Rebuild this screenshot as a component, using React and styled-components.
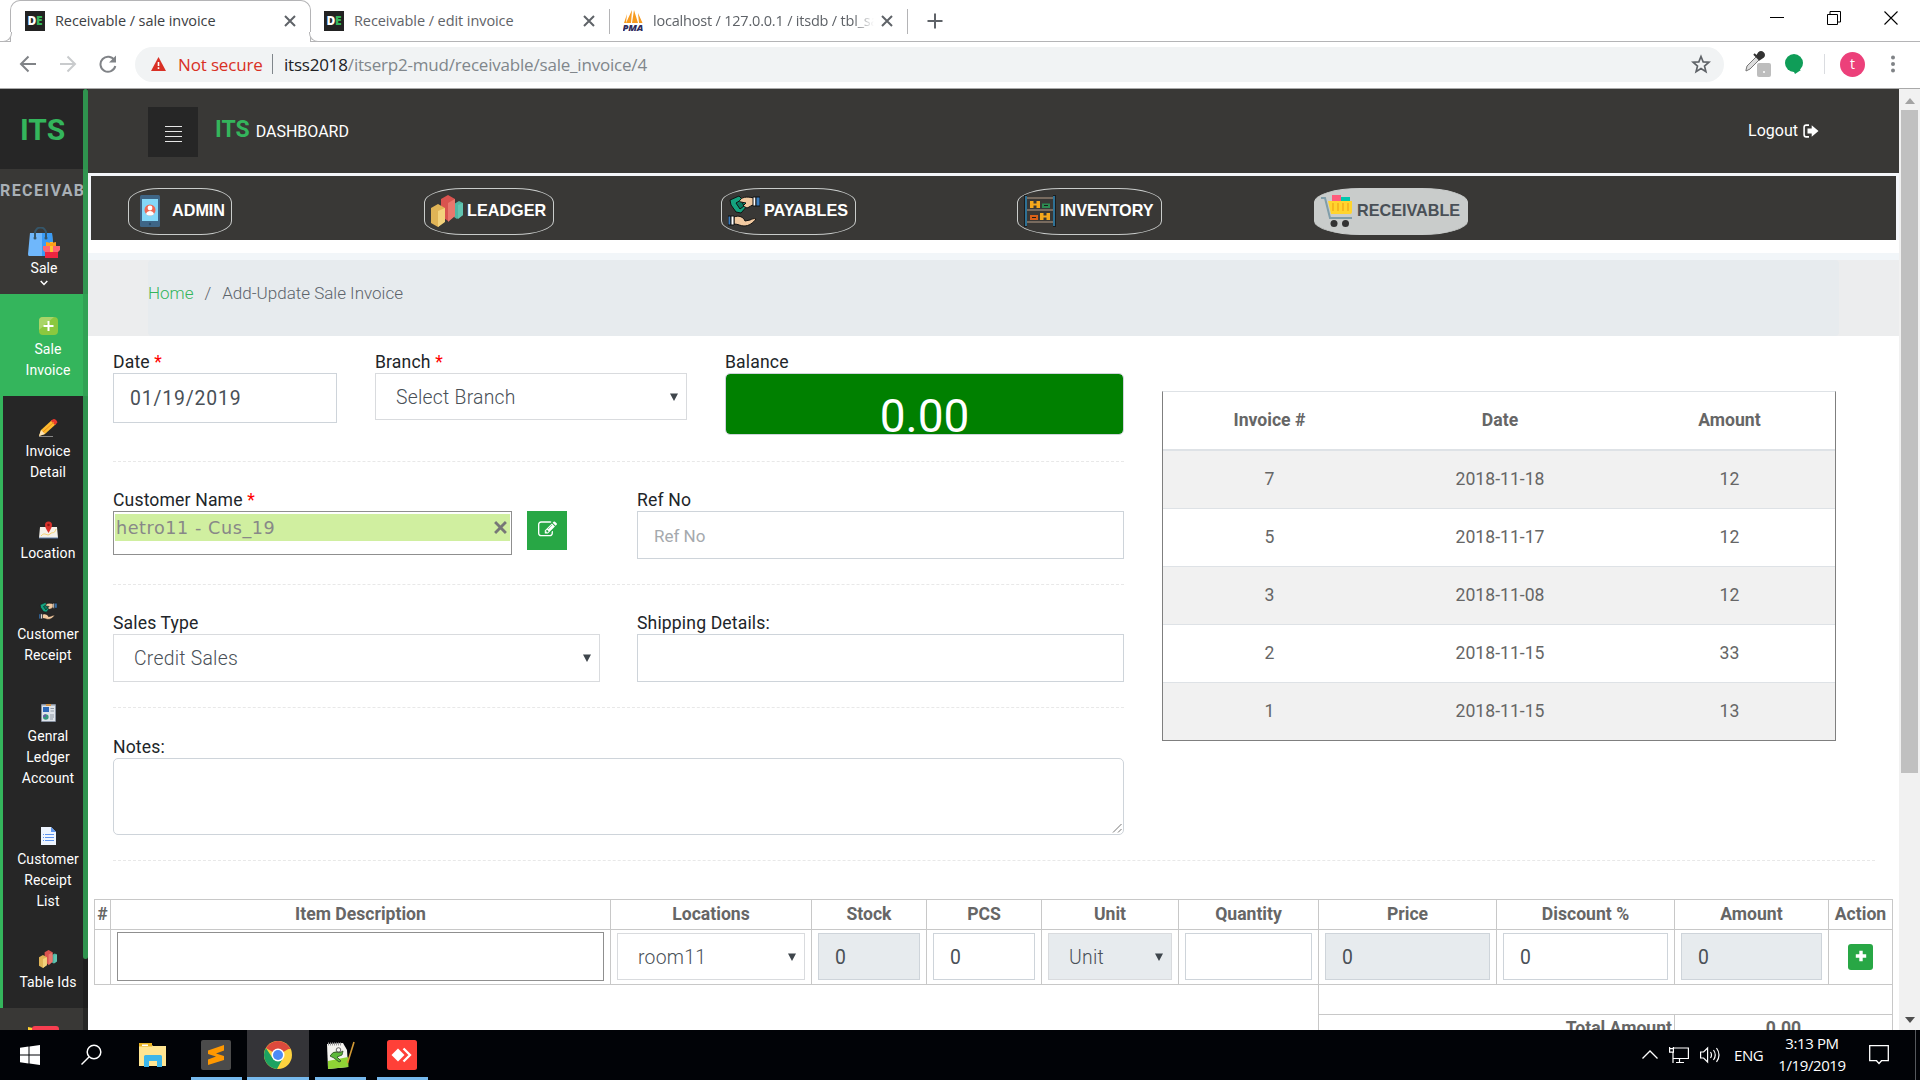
import React from "react";
import styled, { createGlobalStyle, css } from "styled-components";

const Global = createGlobalStyle`
  * { box-sizing: border-box; }
  html, body { margin: 0; padding: 0; overflow: hidden; background: #fff; }
  body { font-family: Roboto, "Liberation Sans", sans-serif; font-size: 17.6px; color: #212529; }
  svg { display: block; flex: none; }
`;

const ui = `"Open Sans", "Noto Sans", sans-serif`;
const dark = "#393836";
const darker = "#262626";
const green = "#34b55c";

const Window = styled.div`
  width: 1920px;
  height: 1080px;
  display: flex;
  flex-direction: column;
  overflow: hidden;
`;

/* ---------- browser chrome ---------- */
const TabStrip = styled.div`
  height: 42px;
  flex: none;
  display: flex;
  border-bottom: 1px solid #b4b4b6;
  padding-left: 10px;
  font-family: ${ui};
`;
const Tab = styled.div`
  position: relative;
  display: flex;
  align-items: center;
  height: 42px;
  width: ${(p) => p.$w}px;
  padding: 0 14px 1px ${(p) => p.$pad}px;
  font-size: 14.5px;
  line-height: 20px;
  letter-spacing: ${(p) => p.$ls || "-0.08px"};
  color: ${(p) => (p.$active ? "#3c4043" : "#5f6368")};
  white-space: nowrap;
  ${(p) =>
    p.$active &&
    css`
      background: #fff;
      border: 1px solid #b4b4b6;
      border-bottom: 0;
      border-radius: 10px 10px 0 0;
      &::before,
      &::after {
        content: "";
        position: absolute;
        bottom: 0;
        width: 9px;
        height: 9px;
        background: #fff;
        border-bottom: 1px solid #b4b4b6;
      }
      &::before {
        left: -9px;
        border-right: 1px solid #b4b4b6;
        border-bottom-right-radius: 9px;
      }
      &::after {
        right: -9px;
        border-left: 1px solid #b4b4b6;
        border-bottom-left-radius: 9px;
      }
    `}
`;
const TabTitle = styled.span`
  flex: 1;
  margin-left: 10px;
  overflow: hidden;
  ${(p) => p.$fade && "mask-image: linear-gradient(90deg, #000 200px, transparent 221px);"}
`;
const TabLine = styled.div`
  width: 1px;
  height: 25px;
  margin-top: 9px;
  background: #b4b4b6;
`;
const Favicon = styled.span`
  width: 20px;
  height: 20px;
  background: #222;
  color: #fff;
  font: 800 12px/20px "Open Sans", sans-serif;
  letter-spacing: -0.3px;
  text-align: center;
  b { color: ${green}; font-weight: 800; }
`;
const NewTab = styled.div`
  margin: 13px 0 0 19px;
`;
const WindowButtons = styled.div`
  margin-left: auto;
  display: flex;
  gap: 43px;
  padding: 11px 22px 0 0;
`;
const Toolbar = styled.div`
  height: 47px;
  flex: none;
  display: flex;
  align-items: center;
  padding: 0 22px 2px 19px;
  border-bottom: 1px solid #a9a9a9;
  font-family: ${ui};
`;
const NavGlyphs = styled.div`
  display: flex;
  gap: 22px;
  width: 116px;
`;
const Omnibox = styled.div`
  width: 1589px;
  height: 35px;
  border-radius: 18px;
  background: #f1f3f4;
  display: flex;
  align-items: center;
  padding: 0 13px 0 16px;
  font-size: 17px;
  color: #80868b;
  white-space: nowrap;
`;
const Danger = styled.span`
  color: #d93025;
  width: 84px;
  margin-left: 12px;
  letter-spacing: -0.15px;
`;
const Bar = styled.i`
  width: 1px;
  height: 20px;
  background: ${(p) => p.$c};
  margin: ${(p) => p.$m};
`;
const Url = styled.span`
  flex: 1;
  letter-spacing: -0.2px;
  b { color: #202124; font-weight: 400; }
`;
const Extensions = styled.div`
  display: flex;
  align-items: center;
  margin-left: 19px;
  flex: 1;
`;
const Hangouts = styled.span`
  margin-left: 13px;
`;
const Avatar = styled.span`
  width: 25px;
  height: 25px;
  border-radius: 50%;
  background: #ec407a;
  color: #fff;
  font: 14px/23px ${ui};
  text-align: center;
  margin-right: auto;
`;
const MenuDots = styled.span`
  margin-right: 3px;
`;

/* ---------- page ---------- */
const Page = styled.div`
  flex: 1;
  min-height: 0;
  display: flex;
  overflow: hidden;
`;
const Sidebar = styled.aside`
  position: relative;
  width: 88px;
  flex: none;
  background: ${dark};
  overflow: hidden;
`;
const SideLogo = styled.div`
  height: 80px;
  background: ${darker};
  color: ${green};
  font-size: 30px;
  font-weight: 700;
  line-height: 82px;
  padding-left: 20px;
`;
const SideTitle = styled.div`
  height: 58px;
  padding-top: 10px;
  line-height: 24px;
  font-size: 16px;
  font-weight: 700;
  letter-spacing: 1.4px;
  color: #a9b0b6;
  width: 86px;
  overflow: hidden;
`;
const SideGroup = styled.div`
  display: flex;
  flex-direction: column;
  align-items: center;
  height: 67px;
  color: #fff;
  font-size: 14px;
  line-height: 21px;
  svg:last-child { margin-top: 1px; }
`;
const SubMenu = styled.div`
  border-left: 3px solid ${green};
  background: ${darker};
`;
const SubItem = styled.div`
  display: flex;
  flex-direction: column;
  align-items: center;
  gap: 4px;
  padding: 23px 4px 15px 9px;
  font-size: 14px;
  letter-spacing: 0.1px;
  line-height: 21px;
  text-align: center;
  color: #fff;
  background: ${(p) => (p.$active ? green : "transparent")};
`;
const SideScroll = styled.div`
  position: absolute;
  right: 0;
  top: 0;
  bottom: 0;
  width: 5px;
  background: rgba(25, 25, 25, 0.55);
  &::after {
    content: "";
    display: block;
    height: 870px;
    border-radius: 3px;
    background: rgba(52, 181, 92, 0.78);
  }
`;
const Main = styled.main`
  flex: 1;
  min-width: 0;
  display: flex;
  flex-direction: column;
  overflow: hidden;
  background: #fff;
`;
const Header = styled.header`
  height: 84px;
  flex: none;
  background: ${dark};
  display: flex;
  align-items: flex-start;
  padding: 18px 80px 0 60px;
  color: #fff;
`;
const Burger = styled.div`
  width: 50px;
  height: 50px;
  background: ${darker};
  display: flex;
  flex-direction: column;
  align-items: center;
  gap: 4px;
  padding-top: 19px;
  i { width: 17px; height: 1px; background: #e6e6e6; flex: none; }
`;
const Brand = styled.div`
  margin-left: 17px;
  font-size: 16px;
  line-height: 30px;
  padding-top: 8px;
  b { font-size: 23px; font-weight: 700; color: ${green}; margin-right: 6px; }
`;
const Logout = styled.div`
  margin-left: auto;
  display: flex;
  align-items: center;
  gap: 5px;
  font-size: 16px;
  line-height: 24px;
  padding-top: 12px;
`;
const ModuleBar = styled.nav`
  height: 67px;
  flex: none;
  border: 3px solid #f4f6fa;
  border-bottom: 0;
  background: ${dark};
  display: grid;
  grid-template-columns: 296px 297px 296px 297px 297px;
  align-items: start;
  justify-items: start;
  padding: 12px 0 0 37px;
`;
const Module = styled.div`
  height: 47px;
  width: ${(p) => p.$w}px;
  border: 1px solid #c9cccb;
  border-radius: 30%;
  display: flex;
  align-items: center;
  padding: 0 0 2px 6px;
  gap: 4px;
  white-space: nowrap;
  font: bold 16.2px "Liberation Sans", Arial, sans-serif;
  color: ${(p) => (p.$on ? "#495057" : "#fff")};
  background: ${(p) => (p.$on ? "#c9cccb" : "transparent")};
`;
const CrumbStrip = styled.div`
  flex: none;
  height: 96px;
  padding: 20px 60px 0;
  background: linear-gradient(#fff 13px, #f2f6f9 13px, #f2f6f9 20px, #ecedee 20px);
`;
const Crumbs = styled.div`
  height: 76px;
  border-radius: 4px;
  background: #e7ebee;
  padding-top: 20px;
  line-height: 26px;
  font-size: 17px;
  font-weight: 300;
  color: #5d646b;
  display: flex;
  gap: 11px;
  a { color: ${green}; }
`;
const FormArea = styled.div`
  display: flex;
  padding: 13px 63px 0 25px;
  flex: none;
`;
const Fields = styled.div`
  width: 1011px;
`;
const FieldRow = styled.div`
  display: flex;
  height: ${(p) => p.$h}px;
  margin-bottom: ${(p) => p.$mb}px;
  border-bottom: 1px dashed #e8e8e8;
`;
const FieldBox = styled.div`
  width: ${(p) => p.$w}px;
  margin-right: ${(p) => p.$mr || 0}px;
`;
const Label = styled.label`
  display: block;
  height: 24px;
  line-height: 26px;
  letter-spacing: 0.14px;
  white-space: nowrap;
  i { color: red; font-style: normal; }
`;
const controlBox = css`
  display: block;
  width: 100%;
  height: ${(p) => p.$h || 48}px;
  border: 1px solid #ced4da;
  background: ${(p) => (p.$off ? "#e7ebee" : "#fff")};
  color: #495057;
  font-family: inherit;
  font-size: 19.36px;
`;
const Input = styled.input`
  ${controlBox}
  border-radius: 0;
  outline: 0;
  padding: ${(p) => (p.$h === 47 ? 2 : 0)}px 16px 0;
  letter-spacing: ${(p) => p.$ls || 0};
  &::placeholder { color: #a5a9ad; font-size: 17px; opacity: 1; }
`;
const SelectBox = styled.div`
  ${controlBox}
  border-color: #d9dbde;
  display: flex;
  align-items: center;
  justify-content: space-between;
  padding: 0 8px 0 20px;
  font-weight: 300;
  letter-spacing: 0.25px;
  span { padding-top: ${(p) => (p.$h === 47 ? 2 : 0)}px; }
`;
const Balance = styled.div`
  height: 62px;
  border: 1px solid #ced4da;
  border-radius: 5px;
  background: green;
  background-clip: padding-box;
  color: #fff;
  font-size: 46px;
  line-height: 54px;
  padding-top: 15px;
  overflow: hidden;
  text-align: center;
`;
const TokenBox = styled.div`
  height: 44px;
  border: 1px solid #8f8f8f;
  padding: 2px 1px;
`;
const Token = styled.div`
  height: 27px;
  background: #d0efa0;
  display: flex;
  align-items: center;
  justify-content: space-between;
  padding: 0 3px 0 1px;
  font: 17.6px "DejaVu Sans", sans-serif;
  letter-spacing: 0.57px;
  color: #888;
`;
const EditButton = styled.div`
  width: 40px;
  height: 39px;
  margin: 24px 70px 0 0;
  background: #28a745;
  color: #fff;
  display: flex;
  align-items: center;
  justify-content: center;
  padding-bottom: 3px;
`;
const Notes = styled.div`
  height: 77px;
  border: 1px solid #ced4da;
  border-radius: 5px;
  display: flex;
  align-items: flex-end;
  justify-content: flex-end;
  padding: 1px;
`;
const InvoiceTable = styled.div`
  margin: 42px 0 0 38px;
  width: 674px;
  height: 350px;
  border: 1px solid #7f7f7f;
  border-top-color: #dee2e6;
`;
const InvoiceRow = styled.div`
  display: grid;
  grid-template-columns: 213px 248px 1fr;
  text-align: center;
  color: #666;
  height: ${(p) => (p.$last ? 57 : 58)}px;
  line-height: 56px;
  border-bottom: ${(p) => (p.$last ? 0 : 1)}px solid #dee2e6;
  background: ${(p) => (p.$odd ? "#f1f1f1" : "#fff")};
  ${(p) => p.$head && "font-weight: 700; height: 59px; line-height: 56px; border-bottom-width: 2px;"}
`;
const LongDash = styled.div`
  width: 1762px;
  flex: none;
  margin: 25px 0 38px 25px;
  border-bottom: 1px dashed #e8e8e8;
`;
const Items = styled.div`
  flex: none;
  margin-left: 6px;
  width: 1799px;
  display: grid;
  grid-template-columns: 16px 500px 201px 115px 115px 137px 140px 178px 178px 154px 64px;
  border-top: 1px solid #c8c8c8;
  border-left: 1px solid #c8c8c8;
`;
const HeadCell = styled.div`
  height: 30px;
  line-height: 29px;
  text-align: center;
  font-weight: 700;
  color: #666;
  white-space: nowrap;
  border-right: 1px solid #c8c8c8;
  border-bottom: 1px solid #c8c8c8;
`;
const Cell = styled.div`
  height: 55px;
  padding: ${(p) => p.$p || "3px 6px"};
  border-right: 1px solid #c8c8c8;
  border-bottom: 1px solid #c8c8c8;
  display: flex;
  justify-content: center;
`;
const ItemPicker = styled.div`
  width: 100%;
  height: 49px;
  border: 1px solid #8f8f8f;
`;
const AddButton = styled.div`
  width: 25px;
  height: 26px;
  margin-top: 11px;
  border-radius: 3px;
  background: #28a745;
  color: #fff;
  display: flex;
  align-items: center;
  justify-content: center;
  padding-bottom: 2px;
`;
const Totals = styled.div`
  margin-left: 1230px;
  width: 575px;
  flex: none;
  border: 1px solid #c8c8c8;
  border-top: 0;
  font-weight: 700;
  color: #666;
`;
const TotalsGap = styled.div`
  height: 30px;
  border-bottom: 1px solid #c8c8c8;
`;
const TotalsRow = styled.div`
  display: grid;
  grid-template-columns: 356px 1fr;
  height: 32px;
  line-height: 27px;
  span:first-child { text-align: right; padding-right: 2px; border-right: 1px solid #c8c8c8; }
  span:last-child { text-align: center; }
`;
const Scrollbar = styled.div`
  width: 21px;
  flex: none;
  background: #f1f1f1;
  padding: 9px 2px 7px;
  display: flex;
  flex-direction: column;
  align-items: center;
  justify-content: space-between;
`;
const Thumb = styled.div`
  width: 17px;
  height: 663px;
  margin: 6px 0 auto;
  background: #c0c0c0;
`;

/* ---------- taskbar ---------- */
const Taskbar = styled.div`
  height: 50px;
  flex: none;
  display: flex;
  background: #010307;
  color: #fff;
  font-family: ${ui};
`;
const Task = styled.div`
  width: ${(p) => p.$w || 62}px;
  display: flex;
  flex-direction: column;
  align-items: center;
  justify-content: center;
  padding-top: ${(p) => (p.$run ? 3 : 0)}px;
  background: ${(p) => (p.$active ? "#343438" : "transparent")};
  &::after {
    content: "";
    display: ${(p) => (p.$run ? "block" : "none")};
    width: ${(p) => (p.$active ? 62 : 51)}px;
    height: 3px;
    background: #76b9ed;
  }
`;
const TaskIcon = styled.div`
  flex: 1;
  display: flex;
  align-items: center;
`;
const Tray = styled.div`
  margin-left: auto;
  display: flex;
  align-items: center;
  width: 278px;
  font-size: 15px;
  letter-spacing: -0.4px;
`;
const TrayIcons = styled.div`
  display: flex;
  align-items: center;
  gap: 11px;
`;
const Lang = styled.span`
  width: 30px;
  margin-left: 14px;
`;
const Clock = styled.div`
  width: 72px;
  margin: 0 21px 0 12px;
  text-align: center;
  line-height: 22px;
  padding-bottom: 2px;
  white-space: nowrap;
`;
const DesktopEdge = styled.i`
  width: 1px;
  height: 50px;
  margin-left: 26px;
  background: #55585c;
`;

/* ---------- drawings ---------- */
const Close = ({ s = 12, c = "#5f6368", w = 2 }) => (
  <svg width={s} height={s} viewBox="0 0 12 12" stroke={c} strokeWidth={w}><path d="M1 1l10 10M11 1L1 11" /></svg>
);
const Caret = () => (
  <svg width="8" height="8" viewBox="0 0 8 8"><path d="M0 .5h8L4 8z" fill="#3f464c" /></svg>
);
const PencilSquare = () => (
  <svg width="19" height="19" viewBox="0 0 1792 1792" fill="#fff"><path d="M888 1184l116-116-152-152-116 116v56h96v96h56zm440-720q-16-16-33 1l-350 350q-17 17-1 33t33-1l350-350q17-17 1-33zm80 594v190q0 119-84.500 203.500t-203.500 84.500h-832q-119 0-203.500-84.500t-84.500-203.500v-832q0-119 84.500-203.500t203.500-84.500h832q63 0 117 25 15 7 18 23 3 17-9 29l-49 49q-14 14-32 8-23-6-45-6h-832q-66 0-113 47t-47 113v832q0 66 47 113t113 47h832q66 0 113-47t47-113v-126q0-13 9-22l64-64q15-15 35-7t20 29zm-96-738l288 288-672 672h-288v-288zm444 132l-92 92-288-288 92-92q28-28 68-28t68 28l152 152q28 28 28 68t-28 68z" /></svg>
);
const SignOut = () => (
  <svg width="16" height="14" viewBox="0 0 16 14"><path d="M6 1.100H3.200Q1.100 1.100 1.100 3.200v7.600q0 2.100 2.100 2.100H6" fill="none" stroke="#fff" strokeWidth="1.600" /><path d="M4.500 4.600h4.200V1.200L15.500 7l-6.800 5.800V9.400H4.500z" fill="#fff" /></svg>
);
const Bars3D = ({ s }) => (
  <svg width={s} height={s} viewBox="0 0 32 32">
    <path d="M23 9l5-3 4 2v12l-6 4-3-2z" fill="#4fb5a3" /><path d="M27 10l5-2v12l-5 4z" fill="#61c5b2" />
    <path d="M10 4l7-4 7 4v17l-7 5-7-5z" fill="#d9534f" /><path d="M17 8l7-4v17l-7 6z" fill="#e8776d" />
    <path d="M0 13l7-4 7 4v13l-7 6-7-4z" fill="#e0b456" /><path d="M7 16l7-3v14l-7 5z" fill="#f3d27c" />
  </svg>
);
const Hands = ({ s }) => (
  <svg width={s} height={s} viewBox="0 0 32 32" stroke="#111" strokeWidth="1" strokeLinejoin="round">
    <path d="M2 5l9-4 9 9-7 8-5-1-5-7z" fill="#14a37f" /><path d="M8 8l5-3 3 6-4 3z" fill="#0a7a61" />
    <path d="M12 5c3-4 9-3 14-2v7c-3 0-4 2-7 3l-4-2 3-3-5-1c-1 0-2-1-1-2z" fill="#f1c9a0" />
    <path d="M25 2h3v9h-3z" fill="#fff" /><path d="M28 2h4v9h-4z" fill="#3d7ec0" />
    <path d="M6 22c5-2 8 0 10 2l1 2 5-1c2-1 4-2 6-1-3 4-7 7-12 7-3 0-6-2-10-2z" fill="#f1c9a0" />
    <path d="M0 21h3v9H0z" fill="#3d7ec0" /><path d="M3 21h3v9H3z" fill="#fff" />
  </svg>
);
const Phone = () => (
  <svg width="33" height="32" viewBox="0 0 33 32">
    <rect x="5" y="0" width="20" height="32" rx="1.500" fill="#3e6586" /><rect x="7" y="4" width="16" height="22" fill="#84d8f8" />
    <circle cx="15" cy="15" r="5.500" fill="#ef6a55" /><circle cx="15" cy="13" r="2.400" fill="#fff" /><path d="M11 19c1-4 7-4 8 0-2 2-6 2-8 0z" fill="#fff" />
    <circle cx="15" cy="29" r="1.200" fill="#2a4b68" />
  </svg>
);
const Shelf = () => (
  <svg width="32" height="32" viewBox="0 0 32 32">
    <path d="M3 3h26M3 15h26M3 27h26" stroke="#8d7c6d" strokeWidth="1.500" />
    <path d="M1.500 0v32M30.500 0v32" stroke="#1c1c1c" strokeWidth="3" /><path d="M2 1v30M30 1v30" stroke="#3aa0d8" strokeWidth="1.300" />
    <path d="M6 6h3.500v2.500h3V6H16v7h-3.500v-2.500h-3V13H6zM16 18h3.500v2.500h3V18H26v7h-3.500v-2.500h-3V25H16z" fill="#f5a81c" />
    <path d="M18 8.500h8V13h-8z" fill="#2c8c52" /><path d="M20 10.500h4" stroke="#1c1c1c" /><path d="M6 20h8v5H6z" fill="#d86018" /><path d="M8 22.500h4" stroke="#1c1c1c" />
  </svg>
);
const Cart = () => (
  <svg width="32" height="32" viewBox="0 0 32 32">
    <path d="M11 0h9v8h-9z" fill="#ff5c7c" /><path d="M20 2h9v6h-9z" fill="#00c7ae" />
    <path d="M0 3h4l5 20h22" fill="none" stroke="#7f9da9" strokeWidth="2" />
    <path d="M7 6h24v11q0 2-2 2H10z" fill="#ffd42e" /><path d="M12 8v8M17 8v8M22 8v8M27 8v8" stroke="#f2ab1a" strokeWidth="1.400" />
    <circle cx="13" cy="28.500" r="3.500" fill="#333" /><circle cx="24.500" cy="28.500" r="3.500" fill="#333" />
  </svg>
);
const Bag = () => (
  <svg width="32" height="31" viewBox="0 0 32 31">
    <path d="M2 6h22l2 22-4 1H1q-1 0-1-2z" fill="#6fb7fb" /><path d="M14 6h10l2 23H14z" fill="#3a9bf5" />
    <path d="M7 11V6a5.500 5.500 0 0111 0v5" fill="none" stroke="#35566a" strokeWidth="2" /><circle cx="7" cy="11" r="1.500" fill="#35566a" /><circle cx="18" cy="11" r="1.500" fill="#35566a" />
    <path d="M17 21h14l-1 4v6H17v-6z" fill="#ee2440" /><path d="M15 19h17v4l-2 2H17l-2-2z" fill="#ff6470" />
    <path d="M22 15h3v10h-3z" fill="#ffc52e" /><path d="M18 15l5 1 5-1v4H18z" fill="#ff9f1a" />
  </svg>
);
const AddTile = () => (
  <svg width="19" height="18" viewBox="0 0 19 18"><rect width="19" height="18" rx="4" fill="#8bc83f" /><path d="M4 0h11L0 13V4q0-4 4-4z" fill="#a8d568" /><path d="M9.500 4v10M4.500 9h10" stroke="#fff" strokeWidth="2" /></svg>
);
const Pencil = () => (
  <svg width="19" height="18" viewBox="0 0 19 18"><path d="M0 17.500h14" stroke="#888" /><path d="M0 17l2-6L13 1l4 4L6 15z" fill="#fdbb2f" /><path d="M0 17l2-6 4 4z" fill="#fbe3b7" /><path d="M13 1q2-2 4 0t1 3l-2 2-4-4z" fill="#e6392e" /><path d="M4 13L15 3" stroke="#f08a1c" /></svg>
);
const MapPin = () => (
  <svg width="19" height="18" viewBox="0 0 19 18"><path d="M1 6h17l1 11H0z" fill="#f4f1ea" /><path d="M2 15c4-5 6 1 9-2s4 1 6-5" stroke="#f3cf70" fill="none" /><path d="M0 17h19" stroke="#5878a8" /><path d="M9.500 12C7 8 6 6 6 4a3.500 3.500 0 017 0c0 2-1 4-3.500 8z" fill="#d8312b" /><circle cx="9.500" cy="4" r="1.300" fill="#8c1512" /></svg>
);
const Report = () => (
  <svg width="15" height="18" viewBox="0 0 15 18"><rect width="15" height="18" rx="1" fill="#8791a0" /><rect x="1" y="1.500" width="13" height="15.500" fill="#dfe4ea" /><path d="M5 0h5v2H5z" fill="#d2954a" /><path d="M2 3h6v5H2z" fill="#2c68b8" /><path d="M9.500 4.500H13M9.500 7H13M9 11h4M9 13h4M9 15h3" stroke="#8f9aa6" /><circle cx="4.800" cy="13" r="2.800" fill="#35977d" /><path d="M4.800 13V10.200A2.800 2.800 0 002 13z" fill="#6a5ca8" /></svg>
);
const Doc = () => (
  <svg width="15" height="18" viewBox="0 0 15 18"><path d="M0 0h10l5 5v13H0z" fill="#eef5ff" /><path d="M10 0l5 5h-5z" fill="#5e97f0" /><path d="M2 7.500h1M4 7.500h9M2 10.500h1M4 10.500h9M2 13.500h1M4 13.500h9" stroke="#5b93ef" strokeWidth="1.200" /></svg>
);
const Pma = () => (
  <svg width="20" height="21" viewBox="0 0 20 21">
    <path d="M9 0L3 13h5zM4 4L1 13h2zM11 0l4 13H9zM15 3l4.500 10H16z" fill="#f79a1f" />
    <text x="-.5" y="20.500" fontFamily="Open Sans" fontSize="8.500" fontWeight="800" fontStyle="italic" fill="#2f2b5c" textLength="20.500" lengthAdjust="spacingAndGlyphs">PMA</text>
  </svg>
);

const modules = [
  ["ADMIN", 104, Phone],
  ["LEADGER", 130, () => <Bars3D s={32} />],
  ["PAYABLES", 135, () => <Hands s={32} />],
  ["INVENTORY", 145, Shelf],
  ["RECEIVABLE", 154, Cart],
];
const sub = [
  [AddTile, ["Sale", "Invoice"]],
  [Pencil, ["Invoice", "Detail"]],
  [MapPin, ["Location"]],
  [() => <Hands s={18} />, ["Customer", "Receipt"]],
  [Report, ["Genral", "Ledger", "Account"]],
  [Doc, ["Customer", "Receipt", "List"]],
  [() => <Bars3D s={18} />, ["Table Ids"]],
];
const invoices = [
  ["7", "2018-11-18", "12"],
  ["5", "2018-11-17", "12"],
  ["3", "2018-11-08", "12"],
  ["2", "2018-11-15", "33"],
  ["1", "2018-11-15", "13"],
];
const heads = ["#", "Item Description", "Locations", "Stock", "PCS", "Unit", "Quantity", "Price", "Discount %", "Amount", "Action"];

function Browser() {
  return (
    <>
      <TabStrip>
        <Tab $active $w={301} $pad={14}>
          <Favicon>D<b>E</b></Favicon><TabTitle>Receivable / sale invoice</TabTitle><Close />
        </Tab>
        <Tab $w={298} $pad={13}>
          <Favicon>D<b>E</b></Favicon><TabTitle>Receivable / edit invoice</TabTitle><Close />
        </Tab>
        <TabLine />
        <Tab $w={297} $pad={13} $ls="-0.2px">
          <Pma /><TabTitle $fade>localhost / 127.0.0.1 / itsdb / tbl_sa</TabTitle><Close />
        </Tab>
        <TabLine />
        <NewTab>
          <svg width="16" height="16" viewBox="0 0 16 16" stroke="#5f6368" strokeWidth="2"><path d="M8 .5v15M.5 8h15" /></svg>
        </NewTab>
        <WindowButtons>
          <svg width="14" height="14" stroke="#000"><path d="M0 6.500h14" /></svg>
          <svg width="14" height="14" fill="none" stroke="#000"><path d="M.5 3.500h10v10H.5zM3 3.500V.5h10.500v10.500H11" /></svg>
          <svg width="14" height="14" stroke="#000" strokeWidth="1.100"><path d="M.5 .5l13 13M13.500 .5l-13 13" /></svg>
        </WindowButtons>
      </TabStrip>
      <Toolbar>
        <NavGlyphs>
          <svg width="18" height="18" fill="none" stroke="#808387" strokeWidth="2"><path d="M17 9H2M9.500 1.500L2 9l7.500 7.500" /></svg>
          <svg width="18" height="18" fill="none" stroke="#c9cbcd" strokeWidth="2"><path d="M1 9h15M8.500 1.500L16 9l-7.500 7.500" /></svg>
          <svg width="18" height="18" fill="none" stroke="#808387" strokeWidth="2"><path d="M15.500 5.500A7.500 7.500 0 1016.300 11" /><path d="M17 .5v7h-7z" fill="#808387" stroke="none" /></svg>
        </NavGlyphs>
        <Omnibox>
          <svg width="15" height="14" viewBox="0 0 15 14"><path d="M7.500 0L15 14H0z" fill="#d93025" /><path d="M7.500 5v4M7.500 10.300v1.700" stroke="#fff" strokeWidth="1.600" /></svg>
          <Danger>Not secure</Danger>
          <Bar $c="#80868b" $m="0 11px 0 10px" />
          <Url><b>itss2018</b>/itserp2-mud/receivable/sale_invoice/4</Url>
          <svg width="20" height="20" viewBox="0 0 24 24" fill="none" stroke="#5f6368" strokeWidth="2"><path d="M12 3l2.600 6.400 6.900.5-5.300 4.500 1.700 6.700L12 17.400l-5.900 3.700 1.700-6.700-5.300-4.500 6.900-.5z" /></svg>
        </Omnibox>
        <Extensions>
          <svg width="29" height="26" viewBox="0 3 29 26"><path d="M3 22l1-4L14 8l3 3L7 21l-4 2z" fill="#ddd" stroke="#777" /><path d="M11 6l6 6M14 8l2-3q2-2 4 0t0 4l-3 2z" stroke="#333" strokeWidth="2" fill="#333" /><rect x="14" y="15" width="14" height="14" rx="2" fill="#bdbdbd" /><circle cx="21" cy="24" r="1" fill="#fff" /></svg>
          <Hangouts><svg width="18" height="20" viewBox="0 0 18 20"><circle cx="9" cy="9" r="9" fill="#0f9d58" /><path d="M8 16h8l-6 4z" fill="#0f9d58" /></svg></Hangouts>
          <Bar $c="#dadce0" $m="0 15px 0 21px" />
          <Avatar>t</Avatar>
          <MenuDots><svg width="4" height="18" fill="#808387"><circle cx="2" cy="2.500" r="2" /><circle cx="2" cy="9" r="2" /><circle cx="2" cy="15.500" r="2" /></svg></MenuDots>
        </Extensions>
      </Toolbar>
    </>
  );
}

function SideNav() {
  return (
    <Sidebar>
      <SideLogo>ITS</SideLogo>
      <SideTitle>RECEIVABLE</SideTitle>
      <SideGroup>
        <Bag />
        Sale
        <svg width="8" height="6" viewBox="0 0 8 6" fill="none" stroke="#fff" strokeWidth="1.500"><path d="M.7 1L4 4.500 7.300 1" /></svg>
      </SideGroup>
      <SubMenu>
        {sub.map(([Icon, lines], i) => (
          <SubItem key={i} $active={i === 0}>
            <Icon />
            <div>{lines.map((l) => <div key={l}>{l}</div>)}</div>
          </SubItem>
        ))}
      </SubMenu>
      <svg width="88" height="32" viewBox="0 0 88 32"><path d="M28 19l5 1v13h-5z" fill="#ffcf30" /><rect x="32" y="18" width="27" height="20" rx="3" fill="#f73e50" /></svg>
      <SideScroll />
    </Sidebar>
  );
}

function InvoiceForm() {
  return (
    <FormArea>
      <Fields>
        <FieldRow $h={113} $mb={25}>
          <FieldBox $w={224} $mr={38}>
            <Label>Date <i>*</i></Label>
            <Input $h={50} $ls="0.85px" readOnly value="01/19/2019" />
          </FieldBox>
          <FieldBox $w={312} $mr={38}>
            <Label>Branch <i>*</i></Label>
            <SelectBox $h={47}><span>Select Branch</span><Caret /></SelectBox>
          </FieldBox>
          <FieldBox $w={399}>
            <Label>Balance</Label>
            <Balance>0.00</Balance>
          </FieldBox>
        </FieldRow>
        <FieldRow $h={98} $mb={25}>
          <FieldBox $w={399} $mr={15}>
            <Label>Customer Name <i>*</i></Label>
            <TokenBox><Token>hetro11 - Cus_19<Close s={13} c="#777" w={2.6} /></Token></TokenBox>
          </FieldBox>
          <EditButton><PencilSquare /></EditButton>
          <FieldBox $w={487}>
            <Label>Ref No</Label>
            <Input placeholder="Ref No" />
          </FieldBox>
        </FieldRow>
        <FieldRow $h={98} $mb={26}>
          <FieldBox $w={487} $mr={37}>
            <Label>Sales Type</Label>
            <SelectBox><span>Credit Sales</span><Caret /></SelectBox>
          </FieldBox>
          <FieldBox $w={487}>
            <Label>Shipping Details:</Label>
            <Input />
          </FieldBox>
        </FieldRow>
        <Label>Notes:</Label>
        <Notes>
          <svg width="10" height="10" stroke="#777"><path d="M1 9.500L9.500 1M6 9.500L9.500 6" /></svg>
        </Notes>
      </Fields>
      <InvoiceTable>
        <InvoiceRow $head><span>Invoice #</span><span>Date</span><span>Amount</span></InvoiceRow>
        {invoices.map((r, i) => (
          <InvoiceRow key={i} $odd={i % 2 === 0} $last={i === 4}>{r.map((c, j) => <span key={j}>{c}</span>)}</InvoiceRow>
        ))}
      </InvoiceTable>
    </FormArea>
  );
}

function ItemGrid() {
  return (
    <>
      <Items>
        {heads.map((h, i) => <HeadCell key={i}>{h}</HeadCell>)}
        <Cell />
        <Cell $p="2px 6px"><ItemPicker /></Cell>
        <Cell><SelectBox $h={47}><span>room11</span><Caret /></SelectBox></Cell>
        <Cell><Input $h={47} $off readOnly value="0" /></Cell>
        <Cell><Input $h={47} readOnly value="0" /></Cell>
        <Cell><SelectBox $h={47} $off><span>Unit</span><Caret /></SelectBox></Cell>
        <Cell><Input $h={47} /></Cell>
        <Cell><Input $h={47} $off readOnly value="0" /></Cell>
        <Cell><Input $h={47} readOnly value="0" /></Cell>
        <Cell><Input $h={47} $off readOnly value="0" /></Cell>
        <Cell>
          <AddButton>
            <svg width="12" height="12" viewBox="0 0 12 12" stroke="#fff" strokeWidth="3.400"><path d="M6 .8v10.400M.8 6h10.400" /></svg>
          </AddButton>
        </Cell>
      </Items>
      <Totals>
        <TotalsGap />
        <TotalsRow><span>Total Amount</span><span>0.00</span></TotalsRow>
      </Totals>
    </>
  );
}

function WindowsBar() {
  return (
    <Taskbar>
      <Task $w={60}>
        <svg width="20" height="20" viewBox="0 0 20 20" fill="#fff"><path d="M0 2.800l8.500-1.200v7.900H0zM9.500 1.500L20 0v9.500H9.500zM0 10.500h8.500v7.900L0 17.200zM9.500 10.500H20V20L9.500 18.500z" /></svg>
      </Task>
      <Task $w={61}>
        <svg width="22" height="22" viewBox="0 0 22 22" fill="none" stroke="#fff" strokeWidth="1.500"><circle cx="14" cy="8" r="6.800" /><path d="M9 13L1.500 20.500" /></svg>
      </Task>
      <Task $w={64}>
        <svg width="28" height="24" viewBox="0 0 28 24"><path d="M0 1h12l2 2h13v20H0z" fill="#ffe591" /><path d="M0 0h13v3.500H0z" fill="#e8b220" /><path d="M3 1.500h6v1.500H3z" fill="#fff" /><path d="M5 23V13.500q0-1.500 1.500-1.500h15q1.500 0 1.500 1.500V24h-5v-6h-8v6H5z" fill="#3cb6ea" /></svg>
      </Task>
      <Task $run><TaskIcon>
        <svg width="30" height="30" viewBox="0 0 30 30"><rect width="30" height="30" rx="2" fill="#4b4b4b" /><path d="M7 10.500L23 5v5.500l-8 3 8 2.500v4L7 25v-5.500l8-3-8-2.500z" fill="#ff9800" /></svg>
      </TaskIcon></Task>
      <Task $run $active><TaskIcon>
        <svg width="28" height="28" viewBox="0 0 28 28"><circle cx="14" cy="14" r="14" fill="#fdd23f" /><path d="M14 14L1.900 7A14 14 0 0126.100 7z" fill="#dc4a3d" /><path d="M1.900 7A14 14 0 0013 28l6-11-5-3-5.500 3z" fill="#1da261" /><path d="M14 7.500h12.300" stroke="#dc4a3d" /><circle cx="14" cy="14" r="6.500" fill="#fff" /><circle cx="14" cy="14" r="5" fill="#4c8bf5" /></svg>
      </TaskIcon></Task>
      <Task $run><TaskIcon>
        <svg width="29" height="29" viewBox="0 0 29 29"><path d="M1 3l16-1 4 7 1 17-20 2z" fill="#f4f4f0" /><path d="M2 20l20-4 .500 10-20.500 2z" fill="#8fd335" /><path d="M2 3h14" stroke="#999" strokeDasharray="1 1" strokeWidth="3" /><path d="M4 15q3-5 7-4t6-1l-1 4-5 2 4 4-2 1-5-4z" fill="#5cb83a" stroke="#2b4a20" strokeWidth=".8" /><circle cx="12.500" cy="9" r="2.300" fill="none" stroke="#444" strokeWidth=".8" /><path d="M28 1L21.500 22" stroke="#d39a35" strokeWidth="1.600" /></svg>
      </TaskIcon></Task>
      <Task $run><TaskIcon>
        <svg width="30" height="30" viewBox="0 0 30 30"><rect width="30" height="30" rx="2.500" fill="#ff4038" /><path d="M11 8.500l6.500 6.500-6.500 6.500L4.500 15z" fill="#fff" /><path d="M16.500 8.500L23 15l-6.500 6.500" fill="none" stroke="#fff" strokeWidth="2.300" /></svg>
      </TaskIcon></Task>
      <Tray>
        <TrayIcons>
          <svg width="16" height="10" viewBox="0 0 16 10" fill="none" stroke="#fff" strokeWidth="1.300"><path d="M.5 8.500L8 1l7.500 7.500" /></svg>
          <svg width="20" height="18" viewBox="0 0 20 18" fill="none" stroke="#fff" strokeWidth="1.200"><path d="M5 2h14.400v10.500H4M4 6v11M10.500 12.500v4M7 16.500h8M.6 2.600h3.800v3.500H.6zM.6 1v1.600M4.400 1v1.600" /></svg>
          <svg width="20" height="18" viewBox="0 0 20 18" fill="none" stroke="#fff" strokeWidth="1.200"><path d="M.6 6h3l4-4v14l-4-4h-3zM10.500 6q2 3 0 6M13.500 4q3.500 5 0 10M16.500 2q5 7 0 14" /></svg>
        </TrayIcons>
        <Lang>ENG</Lang>
        <Clock>3:13 PM<br />1/19/2019</Clock>
        <svg width="20" height="20" viewBox="0 0 20 20" fill="none" stroke="#fff" strokeWidth="1.300"><path d="M.7 .7h18.600v15H12.500L10 18.500 7.500 15.700H.7z" /></svg>
        <DesktopEdge />
      </Tray>
    </Taskbar>
  );
}

export default function App() {
  return (
    <Window>
      <Global />
      <Browser />
      <Page>
        <SideNav />
        <Main>
          <Header>
            <Burger><i /><i /><i /><i /></Burger>
            <Brand><b>ITS</b>DASHBOARD</Brand>
            <Logout>Logout <SignOut /></Logout>
          </Header>
          <ModuleBar>
            {modules.map(([name, w, Icon], i) => (
              <Module key={name} $w={w} $on={i === 4}><Icon />{name}</Module>
            ))}
          </ModuleBar>
          <CrumbStrip>
            <Crumbs><a>Home</a><span>/</span><span>Add-Update Sale Invoice</span></Crumbs>
          </CrumbStrip>
          <InvoiceForm />
          <LongDash />
          <ItemGrid />
        </Main>
        <Scrollbar>
          <svg width="10" height="6"><path d="M0 6L5 0l5 6z" fill="#a3a3a3" /></svg>
          <Thumb />
          <svg width="10" height="6"><path d="M0 0h10L5 6z" fill="#505050" /></svg>
        </Scrollbar>
      </Page>
      <WindowsBar />
    </Window>
  );
}
